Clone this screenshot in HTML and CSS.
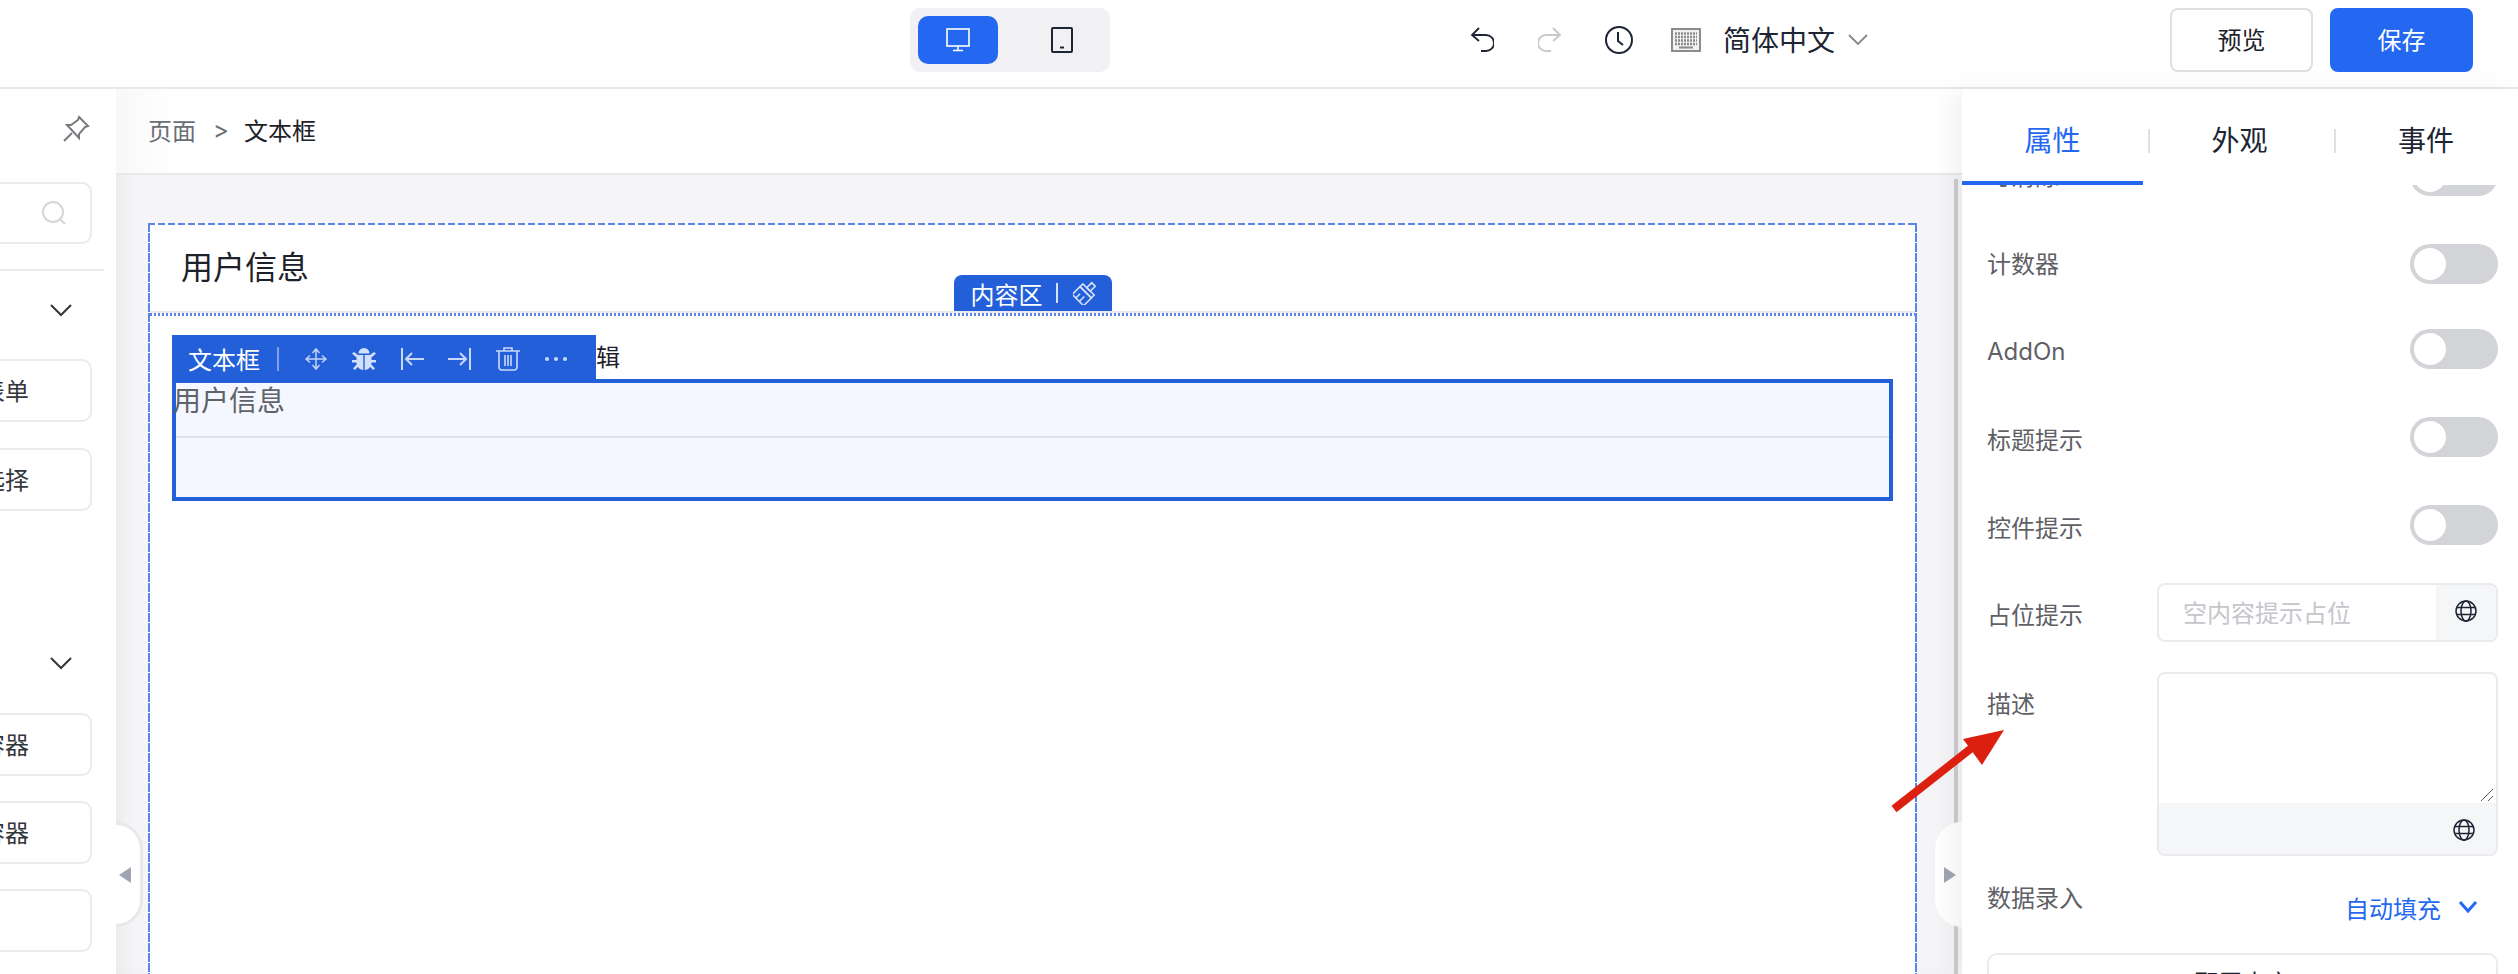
FILE: index.html
```html
<!DOCTYPE html>
<html lang="zh-CN">
<head>
  <meta charset="UTF-8">
  <meta name="viewport" content="width=device-width, initial-scale=1.0">
  <title>页面编辑器</title>
  <link rel="stylesheet" href="styles.css">
</head>
<body>
  <!-- Top bar -->
  <header class="topbar">
    <div class="device-switch">
      <button class="device-btn device-btn-active">
        <svg width="28" height="28" viewBox="0 0 28 28" fill="none" stroke="#fff" stroke-width="1.6"><rect x="3" y="3" width="22" height="17"/><path d="M14 20v4M9 24.500h10"/></svg>
      </button>
      <button class="device-btn">
        <svg width="24" height="28" viewBox="0 0 24 28" fill="none" stroke="#1d2433" stroke-width="2"><rect x="2" y="2" width="20" height="24" rx="1"/><path d="M10 21.500h4"/></svg>
      </button>
    </div>
    <div class="history">
      <svg width="24" height="28" viewBox="0 0 24 28" fill="none" stroke="#1d2433" stroke-width="1.8"><path d="M9 2L2 9l7 6M2 9h14a6 6 0 0 1 0 16h-5"/></svg>
      <svg width="24" height="28" viewBox="0 0 24 28" fill="none" stroke="#c6c8cd" stroke-width="1.8"><path d="M15 2l7 7-7 6M22 9H8a6 6 0 0 0 0 16h5"/></svg>
      <svg width="30" height="30" viewBox="0 0 30 30" fill="none" stroke="#1d2433" stroke-width="2"><circle cx="15" cy="15" r="13"/><path d="M14 7v9l5 4"/></svg>
    </div>
    <div class="lang">
      <svg width="30" height="24" viewBox="0 0 30 24" fill="none" stroke="#8b8b8b"><rect x="1" y="1" width="28" height="22" fill="#f2f2f2" stroke-width="2"/><path d="M4 5.500h22M4 9h22M4 12.500h22M4 16h22" stroke-width="2.500" stroke-dasharray="2 1"/><path d="M8 19.500h14" stroke-width="2"/></svg>
      <span class="lang-name">简体中文</span>
      <svg width="20" height="12" viewBox="0 0 20 12" fill="none" stroke="#85878c" stroke-width="1.800"><path d="M1 1l9 9 9-9"/></svg>
    </div>
    <div class="actions">
      <button class="btn">预览</button>
      <button class="btn btn-primary">保存</button>
    </div>
  </header>

  <main class="main">
    <!-- Left component list -->
    <aside class="left-panel">
      <div class="pin-row">
        <svg width="28" height="28" viewBox="0 0 28 28" fill="none" stroke="#77797e" stroke-width="2"><path d="M17 2l9 9-3 1-6 7v4L5 10h4l7-5z"/><path d="M10 18l-8 8"/></svg>
      </div>
      <div class="search-box">
        <svg width="26" height="26" viewBox="0 0 26 26" fill="none" stroke="#d5d6da" stroke-width="2"><circle cx="12" cy="12" r="10"/><path d="M19 19l5 5"/></svg>
      </div>
      <div class="left-divider"></div>
      <div class="group-head">
        <svg width="22" height="14" viewBox="0 0 22 14" fill="none" stroke="#33363b" stroke-width="2"><path d="M1 2l10 10L21 2"/></svg>
      </div>
      <div class="card-group">
        <div class="comp-card">动态表单</div>
        <div class="comp-card">级联选择</div>
      </div>
      <div class="group-head group-head-second">
        <svg width="22" height="14" viewBox="0 0 22 14" fill="none" stroke="#33363b" stroke-width="2"><path d="M1 2l10 10L21 2"/></svg>
      </div>
      <div class="card-group card-group-tight">
        <div class="comp-card">普通容器</div>
        <div class="comp-card">弹窗容器</div>
        <div class="comp-card"></div>
      </div>
    </aside>

    <!-- Canvas -->
    <section class="center">
      <div class="breadcrumb">
        <span class="crumb">页面</span>
        <span class="crumb crumb-sep">&gt;</span>
        <span class="crumb-current">文本框</span>
      </div>
      <div class="canvas">
        <div class="page-box">
          <div class="page-head">用户信息</div>
          <div class="area-tab">
            <span>内容区</span>
            <i class="tab-sep"></i>
            <svg width="24" height="24" viewBox="0 0 24 24" fill="none" stroke="#d5e0fa" stroke-width="1.600"><g transform="rotate(45 12 12)"><rect x="9.500" y="0" width="5" height="7"/><rect x="4" y="7" width="16" height="4"/><path d="M4 11h16v11H4zM9 16v6M14 15v7"/></g></svg>
          </div>
          <div class="page-body">
            <div class="selected-wrap">
              <div class="edit-hint">辑</div>
              <div class="selected-box">
                <div class="field-label">用户信息</div>
                <div class="field-input"></div>
              </div>
              <div class="toolbar">
                <span class="toolbar-name">文本框</span>
                <i class="toolbar-sep"></i>
                <div class="toolbar-icons">
                  <svg width="24" height="24" viewBox="0 0 24 24" fill="none" stroke="#c3d3f7" stroke-width="1.500"><path d="M12 3v18M3 12h18M8.500 6L12 2l3.500 4M8.500 18l3.500 4 3.500-4M6 8.500L2 12l4 3.500M18 8.500l4 3.500-4 3.500"/></svg>
                  <svg width="24" height="24" viewBox="0 0 24 24" fill="#d3e0fb"><path d="M6.500 6.500a5.500 5.500 0 0 1 11 0z"/><path d="M4.500 8h6.800v15C7 23 4.500 19 4.500 15zM19.500 8h-6.800v15c4.300 0 6.800-4 6.800-8z"/><path d="M0 6.500l2-1.500 4 3-1.500 2.500zM24 6.500L22 5l-4 3 1.500 2.500zM0 13h6v2.500H0zM18 13h6v2.500h-6zM1 21.500l4.500-5 1.500 2L3 23zM23 21.500l-4.500-5-1.500 2 4 4.500z"/></svg>
                  <svg width="24" height="24" viewBox="0 0 24 24" fill="none" stroke="#c9d8f9" stroke-width="2"><path d="M2 1v22M24 12H7M12 6l-6 6 6 6"/></svg>
                  <svg width="24" height="24" viewBox="0 0 24 24" fill="none" stroke="#c9d8f9" stroke-width="2"><path d="M22 1v22M0 12h17M12 6l6 6-6 6"/></svg>
                  <svg width="24" height="24" viewBox="0 0 24 24" fill="none" stroke="#c9d8f9" stroke-width="1.600"><path d="M0 4h24M8 4V1h8v3M3 4v16a3 3 0 0 0 3 3h12a3 3 0 0 0 3-3V4M9 8v11M12 8v11M15 8v11"/></svg>
                  <svg width="24" height="24" viewBox="0 0 24 24" fill="#c9d8f9"><circle cx="3" cy="12" r="2"/><circle cx="12" cy="12" r="2"/><circle cx="21" cy="12" r="2"/></svg>
                </div>
              </div>
            </div>
          </div>
        </div>
      </div>
      <div class="scrollbar"></div>
      <div class="handle handle-left">
        <svg width="12" height="16" viewBox="0 0 12 16"><path d="M12 0v16L0 8z" fill="#a1a5b2"/></svg>
      </div>
      <div class="handle handle-right">
        <svg width="12" height="16" viewBox="0 0 12 16"><path d="M0 0v16l12-8z" fill="#a1a5b2"/></svg>
      </div>
    </section>

    <!-- Right properties panel -->
    <aside class="right-panel">
      <nav class="tabs">
        <div class="tab tab-active">属性</div>
        <div class="tab tab-line">外观</div>
        <div class="tab tab-line tab-last">事件</div>
      </nav>
      <div class="panel-body">
        <div class="prop-list">
          <div class="prop-row">
            <span class="prop-label prop-label-up">可清除</span>
            <span class="toggle"></span>
          </div>
          <div class="prop-row prop-row-tight">
            <span class="prop-label prop-label-up">计数器</span>
            <span class="toggle"></span>
          </div>
          <div class="prop-row">
            <span class="prop-label prop-label-down">AddOn</span>
            <span class="toggle"></span>
          </div>
          <div class="prop-row">
            <span class="prop-label">标题提示</span>
            <span class="toggle"></span>
          </div>
          <div class="prop-row">
            <span class="prop-label">控件提示</span>
            <span class="toggle"></span>
          </div>
          <div class="field-row">
            <span class="prop-label">占位提示</span>
            <div class="input-box">
              <span class="placeholder">空内容提示占位</span>
              <span class="input-addon">
                <svg width="22" height="22" viewBox="0 0 22 22" fill="none" stroke="#1d2433" stroke-width="1.500"><circle cx="11" cy="11" r="10"/><ellipse cx="11" cy="11" rx="5" ry="10"/><path d="M2 7.500h18M2 14.500h18"/></svg>
              </span>
            </div>
          </div>
          <div class="field-row field-row-area">
            <span class="prop-label prop-label-top">描述</span>
            <div class="area-box">
              <div class="area-text">
                <svg class="grip" width="14" height="14" viewBox="0 0 14 14" fill="none" stroke="#55585e" stroke-width="1"><path d="M1 13L13 1M8 13l5-5"/></svg>
              </div>
              <div class="area-foot">
                <svg width="22" height="22" viewBox="0 0 22 22" fill="none" stroke="#1d2433" stroke-width="1.500"><circle cx="11" cy="11" r="10"/><ellipse cx="11" cy="11" rx="5" ry="10"/><path d="M2 7.500h18M2 14.500h18"/></svg>
              </div>
            </div>
          </div>
          <div class="data-row">
            <span class="prop-label">数据录入</span>
            <span class="auto-fill">自动填充
              <svg width="20" height="14" viewBox="0 0 20 14" fill="none" stroke="#2468f2" stroke-width="3"><path d="M2 2l8 9 8-9"/></svg>
            </span>
          </div>
          <div class="add-box">配置内容</div>
        </div>
      </div>
    </aside>
  </main>

  <!-- Red annotation arrow -->
  <svg class="note-arrow" width="120" height="90" viewBox="0 0 120 90">
    <path d="M4 84L88 18" stroke="#dc2010" stroke-width="8" fill="none"/>
    <path d="M114 5L73 14 92 40z" fill="#dc2010"/>
  </svg>
</body>
</html>
```

FILE: styles.css
```css
/* Base */
* {
  box-sizing: border-box;
}

html, body {
  margin: 0;
  height: 974px;
  overflow: hidden;
}

body {
  position: relative;
  background: #fff;
  color: #1d2129;
  font-family: Inter, "Noto Sans CJK SC", sans-serif;
  font-size: 24px;
}

button {
  font: inherit;
  cursor: pointer;
}

/* Top bar */
.topbar {
  display: flex;
  align-items: center;
  height: 89px;
  padding: 0 45px 7px 910px;
  border-bottom: 2px solid #e9e9eb;
  background: #fff;
}

.device-switch {
  display: flex;
  align-items: center;
  width: 200px;
  height: 64px;
  padding: 0 8px;
  border-radius: 10px;
  background: #f1f1f3;
}

.device-btn {
  display: flex;
  align-items: center;
  justify-content: center;
  width: 80px;
  height: 48px;
  padding: 0;
  border: none;
  border-radius: 10px;
  background: transparent;
}

.device-btn + .device-btn {
  margin-left: 24px;
}

.device-btn-active {
  background: #2468f2;
}

.history {
  display: flex;
  align-items: center;
  gap: 44px;
  margin-left: 360px;
}

.history svg:last-child {
  margin-left: -2px;
}

.lang {
  display: flex;
  align-items: center;
  margin-left: 37px;
}

.lang-name {
  margin: 0 13px 0 22px;
  padding-bottom: 2px;
  font-size: 28px;
  color: #1d2433;
}

.actions {
  display: flex;
  gap: 17px;
  margin-left: auto;
}

.btn {
  width: 143px;
  height: 64px;
  padding: 0 0 3px;
  border: 2px solid #dedfe1;
  border-radius: 8px;
  background: #fff;
  color: #1d2129;
  font-size: 24px;
}

.btn-primary {
  border-color: #2468f2;
  background: #2468f2;
  color: #fff;
}

/* Main layout */
.main {
  display: flex;
  height: 885px;
}

/* Left panel */
.left-panel {
  flex: 0 0 116px;
  overflow: hidden;
  background: #fff;
}

.pin-row {
  display: flex;
  align-items: center;
  justify-content: flex-end;
  height: 80px;
  padding-right: 26px;
}

.search-box {
  display: flex;
  align-items: center;
  justify-content: flex-end;
  width: 132px;
  height: 62px;
  margin: 13px 0 0 -40px;
  padding-right: 23px;
  border: 2px solid #ebebed;
  border-radius: 10px;
}

.left-divider {
  width: 104px;
  height: 2px;
  margin-top: 25px;
  background: #e9e9eb;
}

.group-head {
  display: flex;
  align-items: center;
  justify-content: flex-end;
  height: 78px;
  padding-right: 44px;
}

.group-head-second {
  margin-top: 112px;
  height: 80px;
}

.card-group {
  display: flex;
  flex-direction: column;
  gap: 26px;
  margin-top: 10px;
}

.card-group-tight {
  gap: 25px;
}

.comp-card {
  display: flex;
  align-items: center;
  justify-content: flex-end;
  width: 132px;
  height: 63px;
  margin-left: -40px;
  padding: 0 61px 2px 0;
  border: 2px solid #ebebed;
  border-radius: 10px;
  color: #33363b;
  white-space: nowrap;
}

/* Canvas */
.center {
  position: relative;
  flex: 1;
  min-width: 0;
  display: flex;
  flex-direction: column;
  background: #f5f5f7;
  box-shadow: inset 14px 0 20px -10px rgba(0, 0, 0, 0.06);
}

.breadcrumb {
  display: flex;
  align-items: center;
  height: 86px;
  padding: 0 0 4px 32px;
  border-bottom: 2px solid #e9e9eb;
  background: linear-gradient(90deg, #f8f8f9, #fff 60px);
}

.crumb {
  color: #6b6e75;
}

.crumb-sep {
  margin: 0 15px 0 17px;
}

.crumb-current {
  color: #1d2129;
}

.canvas {
  flex: 1;
  min-height: 0;
  overflow: hidden;
  padding: 48px 45px 0 32px;
}

/* dashes drawn with gradients, the browser's own dashed border is too short */
.page-box {
  position: relative;
  height: 800px;
  padding: 2px;
  background:
    repeating-linear-gradient(90deg, #5a86ea 0 7px, transparent 7px 10px) top / 100% 2px no-repeat,
    repeating-linear-gradient(180deg, #5a86ea 0 9px, transparent 9px 10px) left / 2px 100% no-repeat,
    repeating-linear-gradient(180deg, #5a86ea 0 9px, transparent 9px 10px) right / 2px 100% no-repeat,
    #fff;
}

.page-head {
  display: flex;
  align-items: center;
  height: 88px;
  padding: 0 31px 7px;
  border-bottom: 2px solid #e9e9eb;
  font-size: 32px;
}

.area-tab {
  position: absolute;
  top: 52px;
  left: 50%;
  transform: translateX(-50%);
  display: flex;
  align-items: center;
  width: 158px;
  height: 36px;
  padding-left: 17px;
  border-radius: 8px 8px 0 0;
  background: #235fd9;
  color: #fff;
  font-size: 24px;
}

.tab-sep {
  width: 2px;
  height: 20px;
  margin: 0 15px 0 13px;
  background: #d5e0fa;
}

.page-body {
  padding: 22px 22px 19px;
  background: repeating-linear-gradient(90deg, #5a86ea 0 2px, transparent 2px 4px) top / 100% 3px no-repeat;
}

.selected-wrap {
  position: relative;
}

.edit-hint {
  height: 44px;
  padding-left: 424px;
  line-height: 46px;
  color: #1d2129;
}

.selected-box {
  height: 122px;
  border: 4px solid #235fd9;
  background: #f4f7ff;
}

.field-label {
  height: 55px;
  border-bottom: 2px solid #dfe2ea;
  font-size: 28px;
  line-height: 30px;
  padding-top: 3px;
  text-indent: -3px;
  color: #5f6368;
}

.toolbar {
  position: absolute;
  top: 0;
  left: 0;
  display: flex;
  align-items: center;
  width: 424px;
  height: 48px;
  padding-left: 16px;
  background: #235fd9;
  color: #fff;
}

.toolbar-name {
  padding-bottom: 2px;
  font-size: 24px;
}

.toolbar-sep {
  width: 2px;
  height: 24px;
  margin: 0 25px 0 17px;
  background: #7fa0e8;
}

.toolbar-icons {
  display: flex;
  gap: 24px;
}

/* Scrollbar and side handles */
.scrollbar {
  position: absolute;
  top: 90px;
  right: 4px;
  bottom: 0;
  width: 4px;
  background: #cdcdcf;
}

.handle {
  position: absolute;
  top: 733px;
  display: flex;
  align-items: center;
  width: 27px;
  height: 105px;
  background: #fff;
}

.handle-left {
  left: 0;
  padding-left: 3px;
  border: 3px solid #e8e8ea;
  border-left: none;
  border-radius: 0 28px 28px 0;
}

.handle-right {
  right: 0;
  padding-left: 9px;
  border-radius: 28px 0 0 28px;
}

/* Right panel */
.right-panel {
  flex: 0 0 556px;
  display: flex;
  flex-direction: column;
  position: relative;
  background: #fff;
  box-shadow: -12px 0 24px rgba(0, 0, 0, 0.05);
}

.tabs {
  position: relative;
  z-index: 1;
  display: grid;
  grid-template-columns: 186px 186px 184px;
  height: 96px;
  background: #fff;
}

.tab {
  position: relative;
  display: flex;
  align-items: center;
  justify-content: center;
  padding: 3px 3px 0 0;
  font-size: 28px;
  color: #1d2433;
}

.tab-last {
  padding-right: 0;
}

.tab-active {
  color: #2468f2;
  border-bottom: 4px solid #2468f2;
  margin-right: 5px;
  padding: 7px 0 0;
}

.tab-line::before {
  content: "";
  position: absolute;
  top: 40px;
  left: 0;
  width: 2px;
  height: 24px;
  background: #dedfe1;
}

.panel-body {
  flex: 1;
  min-height: 0;
  overflow: hidden;
}

.prop-list {
  margin-top: -29px;
  padding: 0 20px 0 25px;
}

.prop-row {
  display: flex;
  align-items: center;
  justify-content: space-between;
  height: 40px;
  margin-bottom: 48px;
}

.prop-row-tight {
  margin-bottom: 45px;
}

.prop-label {
  color: #5f6066;
  padding-top: 2px;
}

.prop-label-up {
  margin-top: -6px;
}

.prop-label-down {
  margin-top: 3px;
}

.toggle {
  position: relative;
  width: 88px;
  height: 40px;
  border-radius: 20px;
  background: #d2d4d8;
}

.toggle::after {
  content: "";
  position: absolute;
  top: 4px;
  left: 4px;
  width: 32px;
  height: 32px;
  border-radius: 50%;
  background: #fff;
}

.field-row {
  display: grid;
  grid-template-columns: 170px 341px;
  align-items: center;
  margin-top: -10px;
}

.field-row-area {
  align-items: start;
  margin-top: 30px;
}

.input-box {
  display: flex;
  height: 59px;
  overflow: hidden;
  border: 2px solid #ebebed;
  border-radius: 8px;
}

.placeholder {
  flex: 1;
  padding: 9px 0 0 24px;
  color: #c4c6cb;
}

.input-addon {
  display: flex;
  align-items: center;
  justify-content: center;
  width: 60px;
  padding-bottom: 3px;
  background: #f5f6f8;
}

.prop-label-top {
  padding-top: 13px;
}

.area-box {
  height: 184px;
  overflow: hidden;
  border: 2px solid #ebebed;
  border-radius: 8px;
}

.area-text {
  position: relative;
  height: 129px;
}

.grip {
  position: absolute;
  right: 2px;
  bottom: 1px;
}

.area-foot {
  display: flex;
  align-items: center;
  justify-content: flex-end;
  height: 53px;
  padding-right: 21px;
  background: #f5f6f8;
}

.data-row {
  display: flex;
  justify-content: space-between;
  margin-top: 21px;
  height: 76px;
}

.auto-fill {
  display: flex;
  align-items: center;
  gap: 17px;
  height: 36px;
  margin-top: 12px;
  padding-right: 20px;
  color: #2468f2;
}

.add-box {
  height: 80px;
  padding-top: 9px;
  border: 2px solid #ebebed;
  border-radius: 10px;
  text-align: center;
}

/* Annotation */
.note-arrow {
  position: absolute;
  top: 725px;
  left: 1890px;
}
```
